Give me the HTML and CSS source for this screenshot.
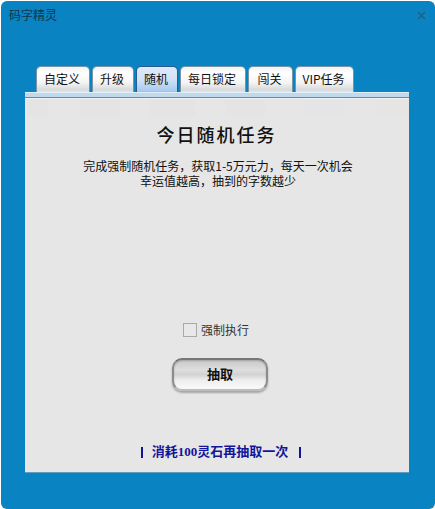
FILE: index.html
```html
<!DOCTYPE html>
<html lang="zh-CN">
<head>
    <meta charset="UTF-8">
    <meta name="viewport" content="width=device-width, initial-scale=1.0">
    <title>码字精灵</title>
    <link rel="stylesheet" href="styles.css">
</head>
<body>
    <div class="window">
        <div class="titlebar">
            <span class="app-name">码字精灵</span>
            <svg class="close" width="9" height="9" viewBox="0 0 9 9">
                <path d="M1 1 L8 8 M8 1 L1 8" stroke="#1d5f86" stroke-width="1.1" fill="none"/>
            </svg>
        </div>
        <div class="tabs">
            <div class="tab tab-custom">自定义</div>
            <div class="tab tab-upgrade">升级</div>
            <div class="tab tab-random active">随机</div>
            <div class="tab tab-lock">每日锁定</div>
            <div class="tab tab-pass">闯关</div>
            <div class="tab tab-vip">VIP任务</div>
        </div>
        <div class="panel">
            <h1 class="panel-title">今日随机任务</h1>
            <p class="desc">完成强制随机任务，获取1-5万元力，每天一次机会<br>幸运值越高，抽到的字数越少</p>
            <label class="force">
                <span class="checkbox"></span>
                <span>强制执行</span>
            </label>
            <button class="draw-btn">抽取</button>
            <div class="redraw">
                <span class="bar"></span>
                <span>消耗100灵石再抽取一次</span>
                <span class="bar bar-right"></span>
            </div>
        </div>
    </div>
</body>
</html>
```

FILE: styles.css
```css
html, body {
    margin: 0;
    padding: 0;
    background: #fff;
}
body {
    width: 435px;
    height: 509px;
    overflow: hidden;
    font-family: "Noto Sans CJK SC", "Liberation Sans", sans-serif;
    color: #222;
}
.window {
    box-sizing: border-box;
    width: 434px;
    height: 508px;
    margin: 1px 0 0 1px;
    padding: 0 25px 0 24px;
    background: #0a83c2;
    border-radius: 6px;
    display: flex;
    flex-direction: column;
}
.titlebar {
    height: 65px;
    margin: 0 -25px 0 -24px;
    padding: 7px 9px 0 8px;
    box-sizing: border-box;
    display: flex;
    justify-content: space-between;
    align-items: flex-start;
}
.app-name {
    font-size: 12px;
    line-height: 14px;
    color: #10364f;
}
.close {
    margin: 3px 0 0 0;
}
.tabs {
    display: flex;
    gap: 2px;
    height: 26px;
    padding-left: 11px;
}
.tab {
    box-sizing: border-box;
    height: 27px;
    padding: 3px 2px 0 0;
    text-align: center;
    font-size: 12px;
    line-height: 18px;
    color: #111;
    border: 1px solid #7a93a6;
    border-bottom: none;
    border-radius: 5px 5px 0 0;
    background: linear-gradient(#f2f3f4 0%, #fff 25%, #f4f4f4 60%, #d6d9db 88%, #eceded 100%);
}
.tab-custom { width: 54px; }
.tab-upgrade { width: 42px; }
.tab-random { width: 42px; }
.tab-lock { width: 66px; }
.tab-pass { width: 45px; }
.tab-vip { width: 59px; }
.tab.active {
    border-color: #2b5a8e;
    background: linear-gradient(#dce9f9 0%, #d3e3f8 45%, #a9cbf0 90%, #8fb9e8 100%);
}
.panel {
    position: relative;
    box-sizing: border-box;
    width: 384px;
    height: 381px;
    border-bottom: 1px solid #5f9cbf;
    /* top strip, then the faint pattern showing through the panel */
    background:
        linear-gradient(#e3eef6 0, #e3eef6 1px, #c0daed 1px, #c0daed 5px, #5a8fb2 5px, #5a8fb2 6px, #eef1f3 6px, #eef1f3 7px, transparent 7px),
        linear-gradient(#e4e4e4, #e4e4e4) 3px 8px / 20px 16px no-repeat,
        linear-gradient(#e4e4e4, #e4e4e4) 55px 8px / 40px 16px no-repeat,
        linear-gradient(#e4e4e4, #e4e4e4) 125px 8px / 45px 16px no-repeat,
        linear-gradient(#e4e4e4, #e4e4e4) 200px 8px / 40px 16px no-repeat,
        linear-gradient(#e3e5e6, #e3e5e6) 278px 8px / 42px 16px no-repeat,
        linear-gradient(#e6e5e3, #e6e5e3) 350px 8px / 34px 16px no-repeat,
        #e6e6e6;
    display: flex;
    flex-direction: column;
    align-items: center;
}
.panel-title {
    margin: 30px 0 0 -1px;
    font-size: 18px;
    line-height: 24px;
    letter-spacing: 2px;
    font-weight: 500;
    color: #111;
}
.desc {
    margin: 12px 0 0;
    padding-left: 2px;
    font-size: 12px;
    line-height: 15px;
    text-align: center;
    color: #111;
}
.force {
    display: flex;
    align-items: center;
    gap: 4px;
    margin: 134px 0 0 -2px;
    font-size: 12px;
    line-height: 16px;
    color: #333;
}
.checkbox {
    box-sizing: border-box;
    width: 14px;
    height: 14px;
    border: 1px solid #a9a9a9;
    background: #e8e8e8;
}
.draw-btn {
    box-sizing: border-box;
    width: 96px;
    height: 33px;
    margin: 20px 0 0 6px;
    padding: 0 0 2px;
    font-family: inherit;
    font-size: 13px;
    font-weight: 700;
    color: #111;
    border: 2px solid #8c8c8c;
    border-top-color: #777;
    border-bottom-color: #bdbdbd;
    border-radius: 10px;
    background: linear-gradient(#c9c9c9 0%, #dedede 35%, #d2d2d2 50%, #eeeeee 70%, #fafafa 100%);
    box-shadow: 0 2px 2px #a5a5a5, inset 0 1px 2px rgba(0, 0, 0, 0.2);
}
.redraw {
    display: flex;
    align-items: center;
    gap: 9px;
    margin: 53px 0 0 8px;
    font-family: "Liberation Serif", "Noto Sans CJK SC", serif;
    font-size: 13px;
    line-height: 16px;
    font-weight: 700;
    color: #14149a;
}
.bar {
    width: 2px;
    height: 11px;
    background: #14149a;
}
.bar-right {
    margin-left: 2px;
}
```
